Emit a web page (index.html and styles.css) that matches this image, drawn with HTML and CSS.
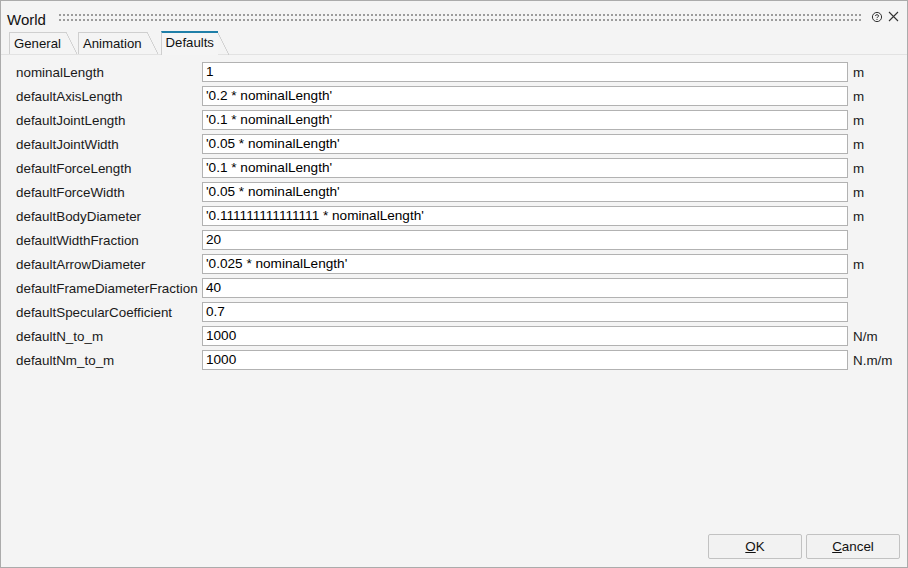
FILE: index.html
```html
<!DOCTYPE html>
<html>
<head>
<meta charset="utf-8">
<link rel="stylesheet" href="styles.css">
</head>
<body>
<div class="window">
  <div class="titlebar">
    <span class="title">World</span>
    <div class="grip"></div>
    <svg class="help" width="12" height="12" viewBox="0 0 12 12">
      <circle cx="6" cy="6" r="4.6" fill="none" stroke="#333" stroke-width="1"/>
      <path d="M4.4 4.9 C4.4 3.3 7.6 3.3 7.6 4.9 C7.6 6 6 5.9 6 7.1" fill="none" stroke="#333" stroke-width="1"/>
      <rect x="5.5" y="8" width="1" height="1" fill="#333"/>
    </svg>
    <svg class="close" width="11" height="11" viewBox="0 0 11 11">
      <path d="M1 1 L10 10 M10 1 L1 10" stroke="#333" stroke-width="1.1"/>
    </svg>
  </div>
  <div class="tabs">
    <div class="tab">General</div>
    <div class="tab">Animation</div>
    <div class="tab active">Defaults</div>
  </div>
  <div class="grid">
    <div class="lbl">nominalLength</div><div class="field">1</div><div class="unit">m</div>
    <div class="lbl">defaultAxisLength</div><div class="field">'0.2 * nominalLength'</div><div class="unit">m</div>
    <div class="lbl">defaultJointLength</div><div class="field">'0.1 * nominalLength'</div><div class="unit">m</div>
    <div class="lbl">defaultJointWidth</div><div class="field">'0.05 * nominalLength'</div><div class="unit">m</div>
    <div class="lbl">defaultForceLength</div><div class="field">'0.1 * nominalLength'</div><div class="unit">m</div>
    <div class="lbl">defaultForceWidth</div><div class="field">'0.05 * nominalLength'</div><div class="unit">m</div>
    <div class="lbl">defaultBodyDiameter</div><div class="field">'0.111111111111111 * nominalLength'</div><div class="unit">m</div>
    <div class="lbl">defaultWidthFraction</div><div class="field">20</div><div class="unit"></div>
    <div class="lbl">defaultArrowDiameter</div><div class="field">'0.025 * nominalLength'</div><div class="unit">m</div>
    <div class="lbl">defaultFrameDiameterFraction</div><div class="field">40</div><div class="unit"></div>
    <div class="lbl">defaultSpecularCoefficient</div><div class="field">0.7</div><div class="unit"></div>
    <div class="lbl">defaultN_to_m</div><div class="field">1000</div><div class="unit">N/m</div>
    <div class="lbl">defaultNm_to_m</div><div class="field">1000</div><div class="unit">N.m/m</div>
  </div>
  <div class="spacer"></div>
  <div class="buttons">
    <div class="btn"><u>O</u>K</div>
    <div class="btn"><u>C</u>ancel</div>
  </div>
</div>
</body>
</html>
```
FILE: styles.css
```css
html, body {
  margin: 0;
  padding: 0;
}
body {
  width: 908px;
  height: 568px;
  font-family: "Liberation Sans", Arial, sans-serif;
  font-size: 13.4px;
  color: #1a1a1a;
  background: #f4f4f4;
}
.window {
  box-sizing: border-box;
  width: 908px;
  height: 568px;
  border: 1px solid #ababab;
  background: #f4f4f4;
  display: flex;
  flex-direction: column;
}
.titlebar {
  height: 29px;
  display: flex;
  align-items: center;
  padding: 2px 8px 0 6px;
  box-sizing: border-box;
}
.title {
  font-size: 15px;
  color: #111;
  margin-right: 13px;
  margin-top: 6px;
}
.grip {
  flex: 1;
  height: 7px;
  margin-top: 2px;
  background-image: radial-gradient(circle at 1px 1px, #9c9c9c 0.9px, transparent 1.1px);
  background-size: 4px 5px;
  margin-right: 9px;
}
.help {
  margin-right: 5px;
}
.tabs {
  height: 24px;
  display: flex;
  align-items: flex-end;
  padding-left: 8px;
  border-bottom: 1px solid #e2e2e2;
}
.tab {
  position: relative;
  box-sizing: border-box;
  height: 22px;
  padding: 3px 5px 0 4px;
  margin-right: 12px;
  border-top: 1px solid #cfcfcf;
  border-left: 1px solid #cfcfcf;
  color: #111;
  background: #f4f4f4;
  font-size: 13.2px;
}
.tab::after {
  content: "";
  position: absolute;
  top: -1px;
  right: -11px;
  width: 11px;
  height: calc(100% + 1px);
  background: linear-gradient(to top right, transparent calc(50% - 0.7px), #c4c4c4 50%, transparent calc(50% + 0.7px));
}
.tab.active {
  height: 24px;
  padding: 2px 4px 0 4px;
  margin-left: 2px;
  margin-bottom: -1px;
  border-top: 2px solid #1f7fa8;
  background: #f5f5f5;
}
.tab.active::after {
  top: 0;
  height: 100%;
}
.grid {
  display: grid;
  grid-template-columns: 186px 1fr 59px;
  grid-auto-rows: 20px;
  row-gap: 4px;
  padding: 7px 0 0 15px;
  align-items: center;
}
.lbl {
  color: #1a1a1a;
  white-space: nowrap;
}
.field {
  box-sizing: border-box;
  height: 20px;
  border: 1px solid #b2b2b2;
  background: #fff;
  padding: 1px 0 0 3px;
  line-height: 16px;
  font-size: 13.6px;
  color: #000;
  white-space: nowrap;
  overflow: hidden;
}
.unit {
  padding-left: 5px;
  color: #1a1a1a;
  white-space: nowrap;
}
.spacer {
  flex: 1;
}
.buttons {
  display: flex;
  justify-content: flex-end;
  gap: 4px;
  padding: 0 7px 8px 0;
}
.btn {
  box-sizing: border-box;
  width: 94px;
  height: 25px;
  border: 1px solid #c2c2c2;
  border-radius: 2px;
  background: #f2f2f2;
  display: flex;
  align-items: center;
  justify-content: center;
  color: #111;
}
```
